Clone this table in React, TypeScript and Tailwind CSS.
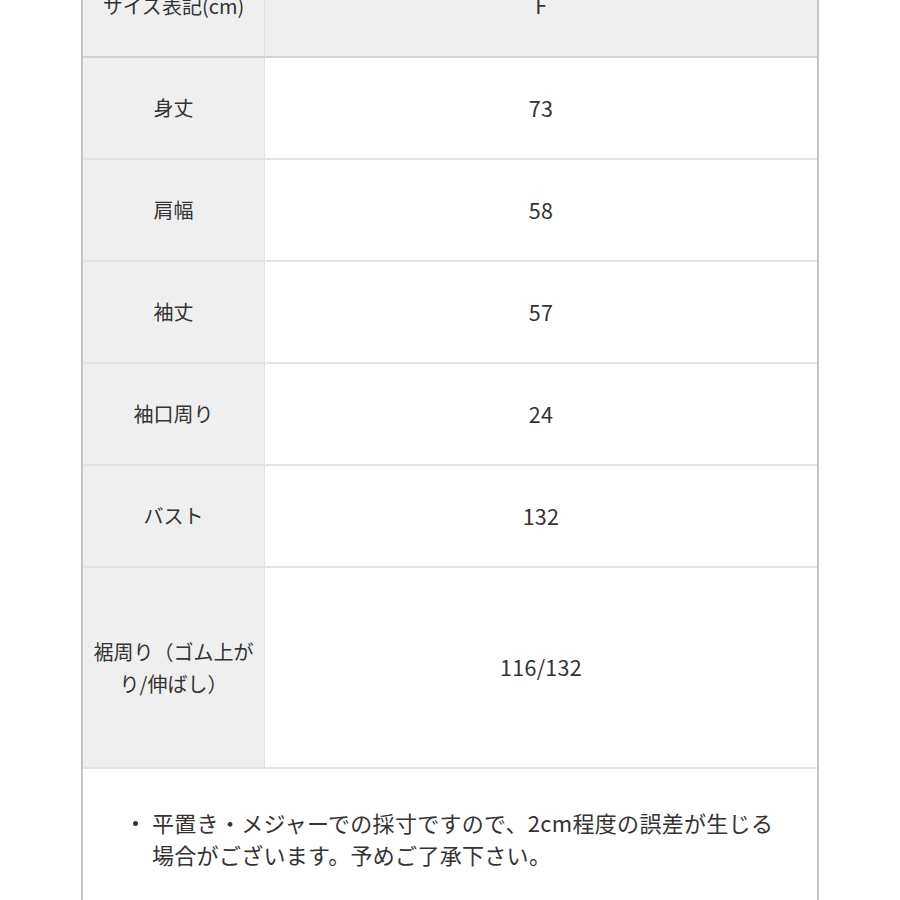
import React from "react";

const rows: { label: React.ReactNode; value: string; tall?: boolean }[] = [
  { label: "身丈", value: "73" },
  { label: "肩幅", value: "58" },
  { label: "袖丈", value: "57" },
  { label: "袖口周り", value: "24" },
  { label: "バスト", value: "132" },
  {
    label: (
      <>
        裾周り（ゴム上が
        <br />
        り/伸ばし）
      </>
    ),
    value: "116/132",
    tall: true,
  },
];

export default function App() {
  return (
    <div
      className="w-[900px] h-[900px] overflow-hidden bg-white text-[#333]"
      style={{ fontFamily: '"Noto Sans CJK JP", "Noto Sans", sans-serif' }}
    >
      <div className="ml-[81px] w-[738px] h-[944px] -mt-[44px] border-x-2 border-[#c4c4c4] flex flex-col">
        <div className="grid grid-cols-[182px_1fr] h-[102px] border-b-2 border-[#d2d2d2] bg-[#efefef]">
          <div className="flex items-center justify-center border-r border-dotted border-[#d8d8d8] text-[20px]">
            サイズ表記(cm)
          </div>
          <div className="flex items-center justify-center text-[21px]">F</div>
        </div>
        {rows.map((r, i) => (
          <div
            key={i}
            className={`grid grid-cols-[182px_1fr] ${r.tall ? "h-[201px]" : "h-[102px]"} border-b-2 border-[#e4e4e4]`}
          >
            <div className="flex items-center justify-center text-center bg-[#efefef] border-r border-dotted border-[#d8d8d8] text-[20px] leading-[32px]">
              <div>{r.label}</div>
            </div>
            <div className="flex items-center justify-center bg-white text-[21.5px] tracking-[0.3px]">{r.value}</div>
          </div>
        ))}
        <div className="pt-[37px] pl-[48px] text-[22px] leading-[32px]">
          <div className="flex">
            <div className="w-[21px] flex-none flex pt-[15px] pl-[2px]">
              <span className="block w-[5px] h-[5px] rounded-full bg-[#333]" />
            </div>
            <div className="tracking-[0.3px]">
              平置き・メジャーでの採寸ですので、2cm程度の誤差が生じる
              <br />
              場合がございます。予めご了承下さい。
            </div>
          </div>
        </div>
      </div>
    </div>
  );
}
